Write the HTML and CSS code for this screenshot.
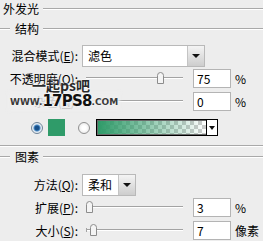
FILE: index.html
```html
<!DOCTYPE html>
<html>
<head>
<meta charset="utf-8">
<link rel="stylesheet" href="styles.css">
</head>
<body>
<div class="panel">
  <div class="legend top"><span class="ltext">外发光</span><span class="rule"></span></div>
  <div class="legend sub"><span class="rule lead"></span><span class="ltext">结构</span><span class="rule"></span></div>

  <div class="row blend">
    <span class="lbl">混合模式(<u>E</u>):</span>
    <div class="select wide"><span class="val">滤色</span><span class="btn"><i class="tri"></i></span></div>
  </div>

  <div class="row srow opacity">
    <span class="lbl">不透明度(<u>O</u>):</span>
    <div class="track"><span class="thumb" style="left:74px"><svg width="9" height="12" viewBox="0 0 9 12"><path d="M1.5 11.5 V3.5 Q1.5 0.5 4.5 0.5 Q7.5 0.5 7.5 3.5 V11.5 Z" fill="#f4f4f4" stroke="#8c8c8c"/></svg></span></div>
    <div class="num">75</div><span class="unit">%</span>
  </div>

  <div class="row srow noise">
    <span class="lbl">杂色(<u>N</u>):</span>
    <div class="track"><span class="thumb" style="left:0px"><svg width="9" height="12" viewBox="0 0 9 12"><path d="M1.5 11.5 V3.5 Q1.5 0.5 4.5 0.5 Q7.5 0.5 7.5 3.5 V11.5 Z" fill="#f4f4f4" stroke="#8c8c8c"/></svg></span></div>
    <div class="num">0</div><span class="unit">%</span>
  </div>

  <div class="row colors">
    <span class="radio on"></span>
    <span class="swatch"></span>
    <span class="radio off"></span>
    <div class="gradbox"><span class="grad"></span><span class="gbtn"><i class="tri small"></i></span></div>
  </div>

  <div class="sep"></div>

  <div class="legend sub2"><span class="rule lead"></span><span class="ltext">图素</span><span class="rule"></span></div>

  <div class="row method">
    <span class="lbl">方法(<u>Q</u>):</span>
    <div class="select narrow"><span class="val">柔和</span><span class="btn"><i class="tri"></i></span></div>
  </div>

  <div class="row srow spread">
    <span class="lbl">扩展(<u>P</u>):</span>
    <div class="track"><span class="thumb" style="left:3px"><svg width="9" height="12" viewBox="0 0 9 12"><path d="M1.5 11.5 V3.5 Q1.5 0.5 4.5 0.5 Q7.5 0.5 7.5 3.5 V11.5 Z" fill="#f4f4f4" stroke="#8c8c8c"/></svg></span></div>
    <div class="num">3</div><span class="unit">%</span>
  </div>

  <div class="row srow size">
    <span class="lbl">大小(<u>S</u>):</span>
    <div class="track ticked"><span class="thumb" style="left:7px"><svg width="9" height="12" viewBox="0 0 9 12"><path d="M1.5 11.5 V3.5 Q1.5 0.5 4.5 0.5 Q7.5 0.5 7.5 3.5 V11.5 Z" fill="#f4f4f4" stroke="#8c8c8c"/></svg></span></div>
    <div class="num">7</div><span class="unit">像素</span>
  </div>

  <div class="watermark">
    <div class="wm1">一起ps吧</div>
    <div class="wm2"><span class="www">WWW.</span><span class="logo">17PS8</span><span class="com">.COM</span></div>
  </div>
</div>
</body>
</html>
```
FILE: styles.css
```css
html, body { margin: 0; padding: 0; }
body { background: #ededed; }

.panel {
  width: 263px;
  height: 241px;
  overflow: hidden;
  position: relative;
  background: #ededed;
  font-family: "Noto Sans CJK SC", "Noto Sans", sans-serif;
  font-size: 12px;
  line-height: 14px;
  color: #000;
}

u { text-decoration: underline; text-underline-offset: 1px; }

.legend { display: flex; align-items: center; height: 14px; }
.rule {
  flex: 1;
  height: 0;
  border-top: 1px solid #a9a9a9;
  border-bottom: 1px solid #fff;
}
.top { margin-top: 2px; padding-left: 3px; }
.top .rule { margin-left: 5px; }
.sub { margin-top: 6px; }
.rule.lead { flex: 0 0 10px; margin-right: 5px; }
.ltext + .rule { margin-left: 4px; }
.sub2 { margin-top: 3px; }

.row { display: flex; align-items: center; }
.lbl { width: 78px; flex: none; text-align: right; white-space: nowrap; }

.blend { margin-top: 9px; height: 22px; }
.select {
  margin-left: 4px;
  height: 22px;
  box-sizing: border-box;
  display: flex;
  background: #fff;
  border: 1px solid #b9b9b9;
}
.wide { width: 123px; }
.narrow { width: 54px; }
.val { flex: 1; padding-left: 5px; line-height: 20px; }
.btn {
  width: 16px;
  background: linear-gradient(#f4f4f4, #cdcdcd);
  border-left: 1px solid #c4c4c4;
  display: flex;
  align-items: center;
  justify-content: center;
}
.tri {
  width: 0; height: 0;
  border-left: 4px solid transparent;
  border-right: 4px solid transparent;
  border-top: 4px solid #111;
}
.tri.small { border-left-width: 3px; border-right-width: 3px; border-top-width: 4px; }

.srow { height: 19px; }
.opacity { margin-top: 2px; }
.noise { margin-top: 4px; }
.spread { margin-top: 2px; }
.size { margin-top: 4px; }

.track { margin-left: 8px; width: 97px; height: 19px; position: relative; flex: none; }
.track::before {
  content: "";
  position: absolute;
  left: 0; right: 0; top: 8px;
  border-top: 1px solid #a3a3a3;
  border-bottom: 1px solid #fff;
}
.ticked::after {
  content: "";
  position: absolute;
  left: 0; top: 7px;
  width: 1px; height: 4px;
  background: #a3a3a3;
}
.thumb { position: absolute; top: 3px; width: 9px; height: 12px; margin-left: -4px; }
.thumb svg { display: block; }

.num {
  margin-left: 10px;
  width: 38px;
  height: 19px;
  box-sizing: border-box;
  border: 1px solid #b4b4b4;
  background: #fff;
  padding-left: 3px;
  line-height: 17px;
}
.unit { margin-left: 4px; }

.colors { margin-top: 8px; height: 17px; padding-left: 31px; }
.radio { width: 12px; height: 12px; box-sizing: border-box; border-radius: 50%; flex: none; }
.radio.on {
  border: 1px solid #6f8497;
  background: radial-gradient(circle, #17508a 0 2px, #4f8fc8 3px, #dfe8f1 4px, #f6f8fa 6px);
}
.radio.off {
  margin-left: 13px;
  border: 1px solid #909090;
  background: radial-gradient(circle, #ffffff 0 2px, #e6e6e6 6px);
}
.swatch { margin-left: 5px; width: 17px; height: 17px; background: #2f9b69; flex: none; }
.gradbox {
  margin-left: 6px;
  width: 122px;
  height: 17px;
  box-sizing: border-box;
  border: 1px solid #000;
  box-shadow: inset 0 0 0 1px #6a6a6a;
  display: flex;
  flex: none;
}
.grad {
  flex: 1;
  margin: 1px 0 1px 1px;
  background:
    linear-gradient(to right, #2f9b69, rgba(47,155,105,0)),
    repeating-conic-gradient(#cdcdcd 0 25%, #ffffff 0 50%) 0 0 / 8px 8px;
}
.gbtn {
  width: 10px;
  border-left: 1px solid #000;
  background: #fff;
  display: flex;
  align-items: center;
  justify-content: center;
}

.sep { margin-top: 9px; border-top: 1px solid #a9a9a9; border-bottom: 1px solid #fff; }
.method { margin-top: 10px; height: 22px; }

.watermark { position: absolute; left: 10px; top: 78px; pointer-events: none; }
.wm1 {
  margin-left: 22px;
  font-size: 14px;
  line-height: 15px;
  font-weight: bold;
  color: #2a2a2a;
  text-shadow: 0 0 2px #fff, 0 0 2px #fff;
}
.wm2 {
  display: flex;
  align-items: flex-end;
  margin-top: 1px;
  background: rgba(237,237,237,0.85);
  box-shadow: 0 0 3px 2px rgba(237,237,237,0.85);
}
.www, .com {
  font-family: "DejaVu Sans", sans-serif;
  font-weight: bold;
  font-size: 9px;
  line-height: 10px;
  color: #3a3a3a;
  text-shadow: 0 0 2px #fff;
  margin-bottom: 2px;
}
.logo {
  font-family: "DejaVu Sans", sans-serif;
  font-weight: bold;
  font-size: 15px;
  line-height: 15px;
  color: #111;
  letter-spacing: -0.8px;
  text-shadow: 0 0 2px #fff, 0 0 2px #fff;
}
```
